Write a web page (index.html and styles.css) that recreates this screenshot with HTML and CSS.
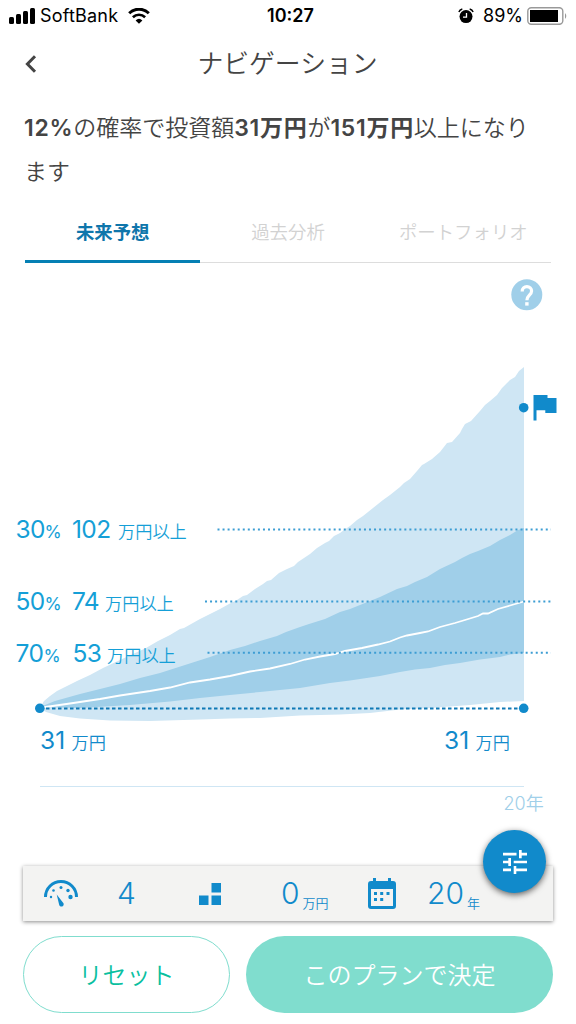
FILE: index.html
```html
<!DOCTYPE html>
<html lang="ja">
<head>
  <meta charset="UTF-8" />
  <meta name="viewport" content="width=device-width, initial-scale=1.0">
  <title>ナビゲーション</title>
  <link rel="stylesheet" href="styles.css">
</head>
<body>
  <div class="status-bar">
    <div class="status-left">
      <svg class="signal" width="26" height="16" viewBox="0 0 26 16"><rect x="0" y="9" width="5" height="7" rx="1.5"/><rect x="7" y="6" width="5" height="10" rx="1.5"/><rect x="14" y="3" width="5" height="13" rx="1.5"/><rect x="21" y="0" width="5" height="16" rx="1.5"/></svg>
      <span class="carrier">SoftBank</span>
      <svg class="wifi" width="22" height="16" viewBox="0 0 22 16"><path d="M1.2 5.2a14 14 0 0 1 19.6 0" fill="none" stroke="#000" stroke-width="3"/><path d="M4.9 9.2a8.8 8.8 0 0 1 12.2 0" fill="none" stroke="#000" stroke-width="2.6"/><path d="M11 15.8 7.6 12.4a5 5 0 0 1 6.8 0z"/></svg>
    </div>
    <div class="clock">10:27</div>
    <div class="status-right">
      <svg class="alarm" width="16" height="16" viewBox="0 0 16 16"><circle cx="8" cy="8.6" r="6.5"/><path d="M.9 4.1Q1.7 1.6 4.3 1M15.1 4.1Q14.3 1.6 11.7 1" fill="none" stroke="#000" stroke-width="1.5"/><path d="M8.5 5v4.2H5" fill="none" stroke="#fff" stroke-width="1.3"/></svg>
      <span class="percent">89%</span>
      <svg class="battery" width="41" height="18" viewBox="0 0 41 18"><rect x=".8" y=".8" width="35" height="16.4" rx="3.5" fill="none" stroke="#999" stroke-width="1.4"/><rect x="3" y="3" width="28" height="12"/><path d="M38 6q2.6 3 0 6z" fill="#999"/></svg>
    </div>
  </div>

  <header>
    <svg class="back" width="12" height="18" viewBox="0 0 12 18"><path d="M10 1.2 2.4 9l7.6 7.8" fill="none" stroke="#444" stroke-width="3"/></svg>
    <h1>ナビゲーション</h1>
  </header>

  <main>
    <p class="summary"><b>12%</b>の確率で投資額<b>31万円</b>が<b>151万円</b>以上になります</p>

    <ul class="tabs">
      <li class="active">未来予想</li>
      <li>過去分析</li>
      <li>ポートフォリオ</li>
    </ul>

    <!-- 未来予想チャート -->
    <svg class="chart" width="576" height="568" viewBox="0 263 576 568">
      <circle cx="526.8" cy="294.7" r="15.5" fill="#a0cfe9"/>
      <path d="M522.2 291.5c0-3 2-4.8 4.7-4.800s4.700 1.900 4.700 4.400c0 4-4.700 4.400-4.700 9.100" fill="none" stroke="#fff" stroke-width="3.2"/>
      <rect x="525.2" y="302.200" width="3.400" height="3.400" fill="#fff"/>

      <path class="band-outer" d="M40 708 44 701 50 696 57 691 65 687 77 681 90 675 103 668 120 660 133 654 146 648 158 641 170 635 180 629 184 628 200 619 210 614 220 609 229 604 237 600 243 596 247 595 255 589 263 584 267 581 271 580 279 573 287 569 294 566 298 562 310 554 317 548 325 543 329 541 334 536 340 533 344 530 350 526 357 520 363 516 373 508 383 500 390 495 400 487 404 483 410 479 417 471 422 465 424 464 432 459 440 452 447 443 452 442 460 433 462 429 465 424 471 421 480 411 485 405 490 401 497 395 502 388 507 383 510 380 515 377 519 371 524 367V701L500 702 470 705 430 708 400 709.5 370 713 340 714.5 300 715.5 260 718 230 718.5 200 719.5 150 721 110 720.5 80 718.5 60 716 46 712z"/>
      <path class="band-inner" d="M40 707 55 701 80 694 120 684 140 678 160 673 185 665 210 657 230 650 245 646 260 641 277 636 286 632 300 627 309 624 325 619 340 612 350 609 365 603 380 597 397 589 407 586 415 582 427 577 440 569 455 562 462 558 470 554 478 551 490 546 500 540 510 535 518 530 524 528V653L510 654.5 500 657 480 659.5 460 663 445 665 430 668 415 669.5 400 672 380 676 350 680.5 330 683 300 688 260 692 230 695 200 698 170 701.5 130 705 80 708z"/>
      <path class="median" d="M42 707.5 70 703.5 100 699 120 695.5 150 691 170 687.5 190 682.5 210 679.5 230 676 250 671.5 270 668.5 290 664 305 659.5 320 656.5 335 654 345 651 362 648 378 644.5 390 641.5 400 637.5 407 635.5 420 633 428 631.5 440 627 455 623 465 620 478 616 483 613.5 488 613.5 498 609 510 605.5 524 601.5"/>

      <path class="guide" d="M217.500 529.5H551M205 601.5h346M207.5 652.7H551"/>
      <path class="base" d="M46 708.5h475"/>
      <g class="mark"><circle cx="39.8" cy="708.3" r="4.8"/><circle cx="523.7" cy="708.3" r="4.8"/><circle cx="523.7" cy="407.7" r="4.8"/><path d="M533.5 395h14v3h9v15h-11.2v-2.7h-8.800v10.200h-3z"/></g>

      <g class="rate">
        <text x="15.5" y="538">30</text><text class="pct" x="44.500" y="538">%</text><text x="72" y="538">102</text><text class="unit" x="118" y="538">万円以上</text>
        <text x="15.5" y="610">50</text><text class="pct" x="44.500" y="610">%</text><text x="72" y="610">74</text><text class="unit" x="105" y="610">万円以上</text>
        <text x="15.5" y="661.5">70</text><text class="pct" x="43.500" y="661.5">%</text><text x="72.5" y="661.5">53</text><text class="unit" x="107" y="661.5">万円以上</text>
      </g>
      <g class="amount">
        <text x="40" y="749">31</text><text class="unit" x="71.500" y="749">万円</text>
        <text x="444" y="749">31</text><text class="unit" x="475.500" y="749">万円</text>
      </g>
      <path class="axis" d="M40 786.5h484"/>
      <text class="years" x="503.5" y="810">20年</text>
    </svg>
  </main>

  <section class="plan-bar">
    <div class="plan-risk">
      <svg width="34" height="27" viewBox="0 0 34 27" fill="#118acb"><path d="M1.5 17A15.5 15.5 0 0 1 32.5 17" fill="none" stroke="#118acb" stroke-width="3"/><circle cx="7" cy="17" r="1.2"/><circle cx="9.5" cy="10.5" r="1.3"/><circle cx="17" cy="7.5" r="1.5"/><circle cx="24" cy="10.5" r="1.7"/><circle cx="26.500" cy="17" r="2.2"/><path d="M12.7 14.5 19.3 23a2.3 2.3 0 1 1-4.200 1.500z"/></svg>
      <span class="num">4</span>
    </div>
    <div class="plan-monthly">
      <svg width="22" height="22" viewBox="0 0 22 22" fill="#118acb"><path d="M12.5 0H22v9.5h-9.500zM0 12.5h9.500V22H0zM12.5 12.5H22V22h-9.500z"/></svg>
      <span class="num">0</span><span class="suffix">万円</span>
    </div>
    <div class="plan-years">
      <svg width="28" height="31" viewBox="0 0 28 31"><path fill="#118acb" fill-rule="evenodd" d="M5 0h3v3h12V0h3v3h2q3 0 3 3v22q0 3-3 3H3q-3 0-3-3V6q0-3 3-3h2zM3 11v17h22V11z"/><path fill="#118acb" d="M6 14h3v3H6zm6.200 0h3v3h-3zm6.300 0h3v3h-3zM6 20h3v3H6zm6.200 0h3v3h-3z"/></svg>
      <span class="num">20</span><span class="suffix">年</span>
    </div>
    <button class="tune-btn">
      <svg width="24" height="24" viewBox="0 0 24 24" fill="#fff"><path d="M0 2.8h13.500v2.700H0zM16 0h2.700v2.800H24v2.700h-5.300v2.800H16zM0 10.700h5.300V8H8v8H5.300v-2.700H0zM10.700 10.700H24v2.600H10.700zM0 18.600h8v2.700H0zM10.700 16h2.600v2.600H24v2.700H13.300V24h-2.600z"/></svg>
    </button>
  </section>

  <footer>
    <button class="reset-btn">リセット</button>
    <button class="decide-btn">このプランで決定</button>
  </footer>
</body>
</html>
```
FILE: styles.css
```css
* { margin: 0; padding: 0; box-sizing: border-box; }
body { width: 576px; height: 1024px; overflow: hidden; background: #fff; color: #444; font-family: Inter, "Noto Sans CJK JP", sans-serif; display: flex; flex-direction: column; }
svg { display: block; flex: none; }
button { font-family: inherit; border: none; }

.status-bar { height: 32px; padding: 0 8px 0 9px; display: grid; grid-template-columns: 1fr auto 1fr; align-items: center; color: #000; font-size: 18px; line-height: 32px; }
.status-left, .status-right { display: flex; align-items: center; }
.status-right { justify-content: flex-end; }
.carrier { margin-left: 5px; letter-spacing: 0.2px; }
.wifi { margin-left: 10px; }
.clock { font-weight: 600; padding-left: 4px; }
.percent { margin: 0 4px 0 9px; }

header { height: 64px; display: flex; align-items: center; padding: 0 25px; }
header h1 { flex: 1; text-align: center; font-size: 25.8px; font-weight: 350; padding: 0 13px 5px 0; }

main { height: 735px; }
.summary { margin: 10px 38px 0 24px; font-size: 23px; line-height: 44px; font-weight: 350; }
.summary b { font-weight: 600; letter-spacing: 0.7px; }

.tabs { display: flex; list-style: none; margin: 8px 25px 0; height: 61px; border-bottom: 1.5px solid #ddd; }
.tabs li { flex: 1; height: 61px; padding-top: 5px; text-align: center; font-size: 18.400px; line-height: 50px; font-weight: 350; color: #d2d2d2; }
.tabs li.active { color: #0f76ab; font-weight: 700; border-bottom: 3px solid #0580b4; }

.band-outer { fill: #cfe6f4; }
.band-inner { fill: #a0cfe9; }
.median { fill: none; stroke: #fff; stroke-width: 1.8; }
.guide { fill: none; stroke: #3c9dd3; stroke-width: 2; stroke-dasharray: 2 3.05; }
.base { fill: none; stroke: #0f79b5; stroke-width: 2; stroke-dasharray: 3.5 2.5; }
.mark { fill: #118acb; }
.axis { stroke: #cfe6f4; }
.rate { fill: #159fd7; font-size: 24.5px; letter-spacing: -0.6px; }
.amount { fill: #118acb; font-size: 24.5px; }
.pct { font-size: 17.5px; }
.unit { font-size: 17.2px; font-weight: 350; letter-spacing: 0; }
.years { fill: #a0cfe9; font-size: 18px; font-weight: 350; }

.plan-bar { position: relative; display: flex; align-items: center; height: 55px; margin: 35px 23px 0; background: #f3f3f2; box-shadow: 0 1px 4px rgba(0, 0, 0, 0.45); color: #118acb; }
.plan-bar > div { display: flex; align-items: center; }
.plan-risk { width: 176px; padding-left: 21px; }
.plan-monthly { width: 169px; }
.plan-years { width: 160px; }
.num { font-size: 30px; line-height: 55px; font-weight: 350; }
.plan-risk .num { margin-left: 39px; }
.plan-monthly .num { margin-left: 60px; }
.plan-years .num { margin-left: 31px; }
.suffix { font-size: 13px; font-weight: 350; margin: 17px 0 0 3px; }
.tune-btn { position: absolute; top: -36px; right: 7px; width: 63px; height: 63px; border-radius: 50%; background: #118acb; display: flex; align-items: center; justify-content: center; box-shadow: 0 2px 6px rgba(0, 0, 0, 0.6); }

footer { display: flex; gap: 16px; padding: 15px 23px 0; }
footer button { height: 77px; border-radius: 39px; font-size: 24px; font-weight: 350; padding-bottom: 2px; }
.reset-btn { width: 207px; background: #fff; border: 1.5px solid #80ddce; color: #0abfa0; }
.decide-btn { flex: 1; background: #80ddce; color: #fff; }
```
